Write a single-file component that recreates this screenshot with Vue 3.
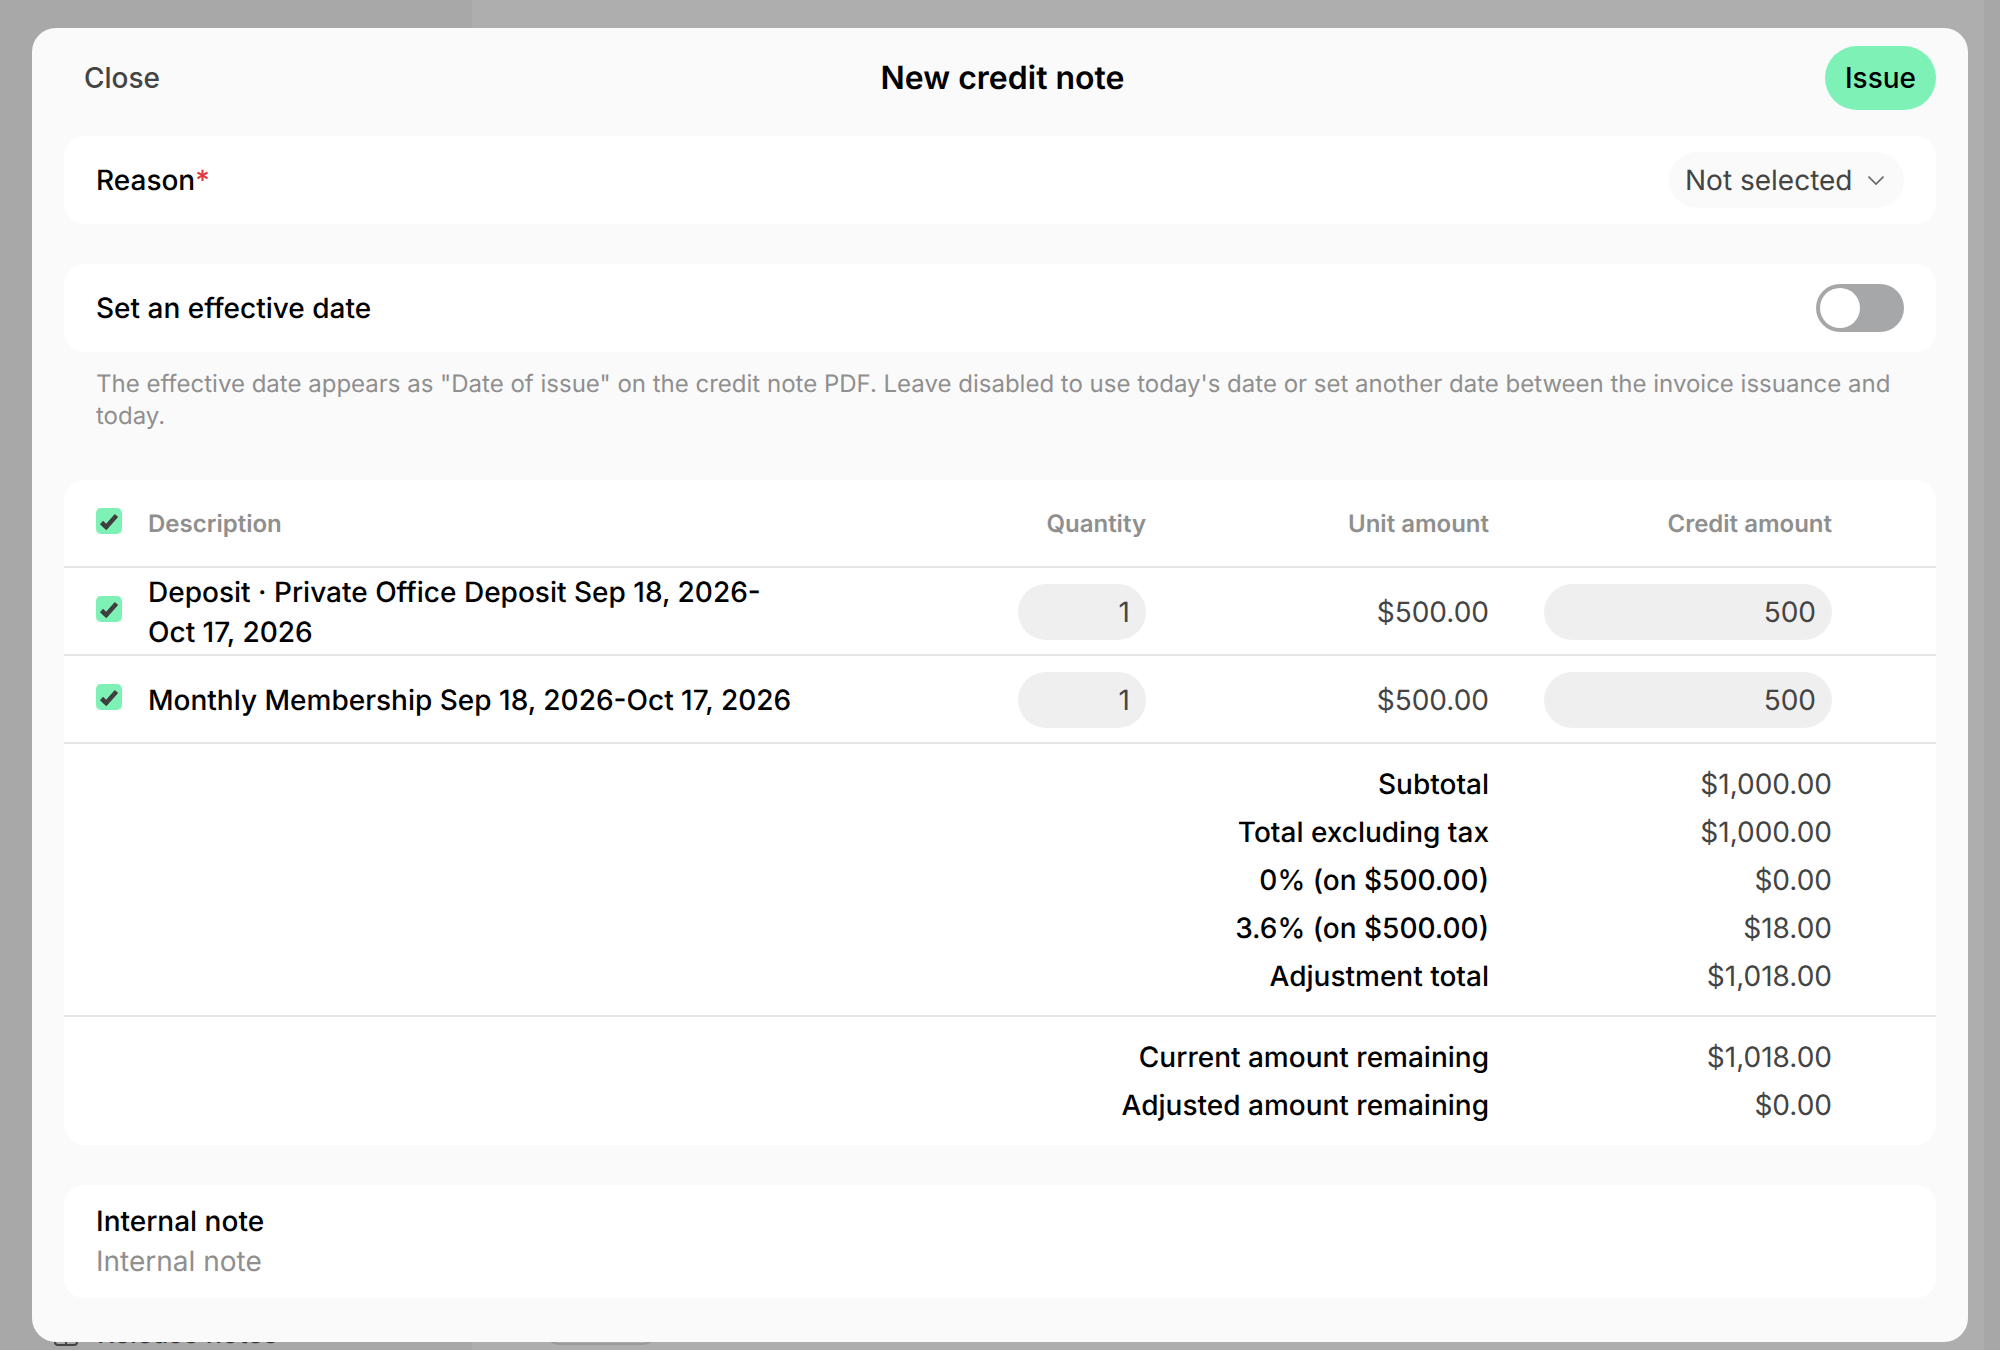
<template>
  <div class="page">
    <!-- page behind the dialog -->
    <div class="backdrop">
      <aside class="sidebar">
        <div class="side-item">
          <svg class="side-icon" width="24" height="24" viewBox="0 0 24 24" fill="none" stroke="#444" stroke-width="2">
            <rect x="1" y="1" width="22" height="22" rx="3" />
            <path d="M12 1v22M1 9h22" />
          </svg>
          <span>Release notes</span>
        </div>
      </aside>
      <main class="behind">
        <div class="ghost-pill"></div>
      </main>
      <div class="strip"></div>
    </div>

    <section class="modal">
      <header class="modal-head">
        <button class="close-btn">Close</button>
        <h1 class="title">New credit note</h1>
        <button class="issue-btn">Issue</button>
      </header>

      <div class="card row-card">
        <span class="label">Reason<span class="req">*</span></span>
        <div class="select">
          <span>Not selected</span>
          <svg width="16" height="16" viewBox="0 0 16 16" fill="none" stroke="#666" stroke-width="1.6">
            <path d="M0.5 4.5L8 12L15.5 4.5" />
          </svg>
        </div>
      </div>

      <div class="card row-card date-card">
        <span class="label">Set an effective date</span>
        <div class="toggle"><span class="knob"></span></div>
      </div>
      <p class="helper">The effective date appears as "Date of issue" on the credit note PDF. Leave disabled to use today's date or set another date between the invoice issuance and today.</p>

      <div class="card table-card">
        <div class="grid-row head-row">
          <span class="check">
            <svg width="26" height="26" viewBox="0 0 26 26"><path d="M5.5 14.5L10.2 19L20.5 7.5" fill="none" stroke="#3f3f3f" stroke-width="4.5" /></svg>
          </span>
          <span>Description</span>
          <span class="num">Quantity</span>
          <span class="num">Unit amount</span>
          <span class="num">Credit amount</span>
        </div>
        <div class="grid-row item-row" v-for="item in items" :key="item.name">
          <span class="check">
            <svg width="26" height="26" viewBox="0 0 26 26"><path d="M5.5 14.5L10.2 19L20.5 7.5" fill="none" stroke="#3f3f3f" stroke-width="4.5" /></svg>
          </span>
          <span class="desc">{{ item.name }}</span>
          <div class="num"><span class="field qty">{{ item.qty }}</span></div>
          <span class="num value">{{ item.unit }}</span>
          <div class="num"><span class="field credit">{{ item.credit }}</span></div>
        </div>

        <div class="totals totals-first">
          <div class="total" v-for="t in totals" :key="t.label">
            <span class="num">{{ t.label }}</span>
            <span class="num value">{{ t.value }}</span>
          </div>
        </div>
        <div class="totals">
          <div class="total" v-for="t in remaining" :key="t.label">
            <span class="num">{{ t.label }}</span>
            <span class="num value">{{ t.value }}</span>
          </div>
        </div>
      </div>

      <div class="card note-card">
        <div class="label">Internal note</div>
        <div class="placeholder">Internal note</div>
      </div>
    </section>
  </div>
</template>

<script setup>
const items = [
  { name: 'Deposit · Private Office Deposit Sep 18, 2026-Oct 17, 2026', qty: 1, unit: '$500.00', credit: 500 },
  { name: 'Monthly Membership Sep 18, 2026-Oct 17, 2026', qty: 1, unit: '$500.00', credit: 500 },
]

const totals = [
  { label: 'Subtotal', value: '$1,000.00' },
  { label: 'Total excluding tax', value: '$1,000.00' },
  { label: '0% (on $500.00)', value: '$0.00' },
  { label: '3.6% (on $500.00)', value: '$18.00' },
  { label: 'Adjustment total', value: '$1,018.00' },
]

const remaining = [
  { label: 'Current amount remaining', value: '$1,018.00' },
  { label: 'Adjusted amount remaining', value: '$0.00' },
]
</script>

<style>
html,
body {
  margin: 0;
  background: #aeaeae;
}
</style>

<style scoped>
.page {
  position: relative;
  width: 2000px;
  height: 1350px;
  overflow: hidden;
  font-family: Inter, "Liberation Sans", sans-serif;
  font-size: 28px;
  line-height: 40px;
  color: #000;
  text-rendering: geometricPrecision;
}

.backdrop {
  display: flex;
  height: 100%;
}

.sidebar {
  width: 472px;
  background: #a8a8a8;
  display: flex;
  flex-direction: column;
  justify-content: flex-end;
  padding-left: 54px;
  box-sizing: border-box;
}

.side-item {
  display: flex;
  align-items: center;
  gap: 19px;
  margin-bottom: -4px;
  color: #333;
  font-size: 27px;
  font-weight: 500;
  height: 40px;
}

.behind {
  flex: 1;
  background: #aeaeae;
  position: relative;
}

.ghost-pill {
  position: absolute;
  left: 69px;
  bottom: 5px;
  width: 120px;
  height: 50px;
  box-sizing: border-box;
  border: 2px solid #9a9a9a;
  border-radius: 20px;
}

.strip {
  width: 16px;
  background: #a7a7a7;
}

.modal {
  position: absolute;
  left: 32px;
  top: 28px;
  width: 1936px;
  height: 1314px;
  box-sizing: border-box;
  padding: 0 32px;
  background: #fafafa;
  border-radius: 24px;
}

.modal-head {
  display: flex;
  align-items: center;
  justify-content: space-between;
  height: 108px;
  padding-bottom: 8px;
  box-sizing: border-box;
}

.close-btn,
.issue-btn {
  border: 0;
  font: inherit;
  font-weight: 500;
}

.close-btn {
  background: none;
  padding: 0 20px;
  color: #444;
}

.issue-btn {
  height: 64px;
  width: 111px;
  padding: 0;
  border-radius: 32px;
  background: #7ef2b6;
  color: #000;
}

.title {
  margin: 0;
  font-size: 32px;
  font-weight: 600;
}

.card {
  background: #fff;
  border-radius: 20px;
}

.row-card {
  display: flex;
  align-items: center;
  justify-content: space-between;
  height: 88px;
  padding: 0 32px;
}

.date-card {
  margin-top: 40px;
}

.label {
  font-weight: 500;
}

.req {
  color: #e0383e;
}

.select {
  display: flex;
  align-items: center;
  justify-content: space-between;
  height: 56px;
  width: 235px;
  box-sizing: border-box;
  padding: 0 20px 0 16px;
  border-radius: 28px;
  background: #fafafa;
  color: #444;
  white-space: nowrap;
}

.toggle {
  width: 88px;
  height: 48px;
  box-sizing: border-box;
  padding: 4px;
  border-radius: 24px;
  background: #a6a7a8;
}

.knob {
  display: block;
  width: 40px;
  height: 40px;
  border-radius: 50%;
  background: #fff;
}

.helper {
  margin: 16px 0 48px;
  padding: 0 32px;
  font-size: 24px;
  line-height: 32px;
  color: #8f8f8f;
}

.grid-row {
  display: grid;
  grid-template-columns: 52px 650px 348px 343px 343px;
  align-items: center;
  padding: 2px 104px 0 32px;
  border-bottom: 2px solid #e6e6e6;
  height: 88px;
  box-sizing: border-box;
}

.head-row {
  font-size: 24px;
  font-weight: 600;
  color: #8f8f8f;
}

.check {
  display: flex;
  width: 26px;
  height: 26px;
  margin-top: -6px;
  border-radius: 5px;
  background: #7ef2b6;
}

.desc {
  font-weight: 500;
}

.num {
  text-align: right;
}

.value {
  color: #444;
}

.field {
  display: inline-block;
  height: 56px;
  line-height: 56px;
  box-sizing: border-box;
  padding: 0 16px;
  border-radius: 28px;
  background: #efefef;
  color: #444;
  text-align: right;
  vertical-align: top;
}

.qty {
  width: 128px;
}

.credit {
  width: 288px;
}

.totals {
  padding: 16px 104px 16px 32px;
}

.totals-first {
  padding-bottom: 15px;
  border-bottom: 2px solid #e6e6e6;
}

.total {
  display: grid;
  grid-template-columns: 1fr 343px;
  height: 48px;
  align-items: center;
  font-weight: 500;
}

.total .value {
  font-weight: 400;
}

.note-card {
  margin-top: 40px;
  height: 113px;
  padding: 16px 32px;
  box-sizing: border-box;
}

.placeholder {
  color: #8f8f8f;
}
</style>
